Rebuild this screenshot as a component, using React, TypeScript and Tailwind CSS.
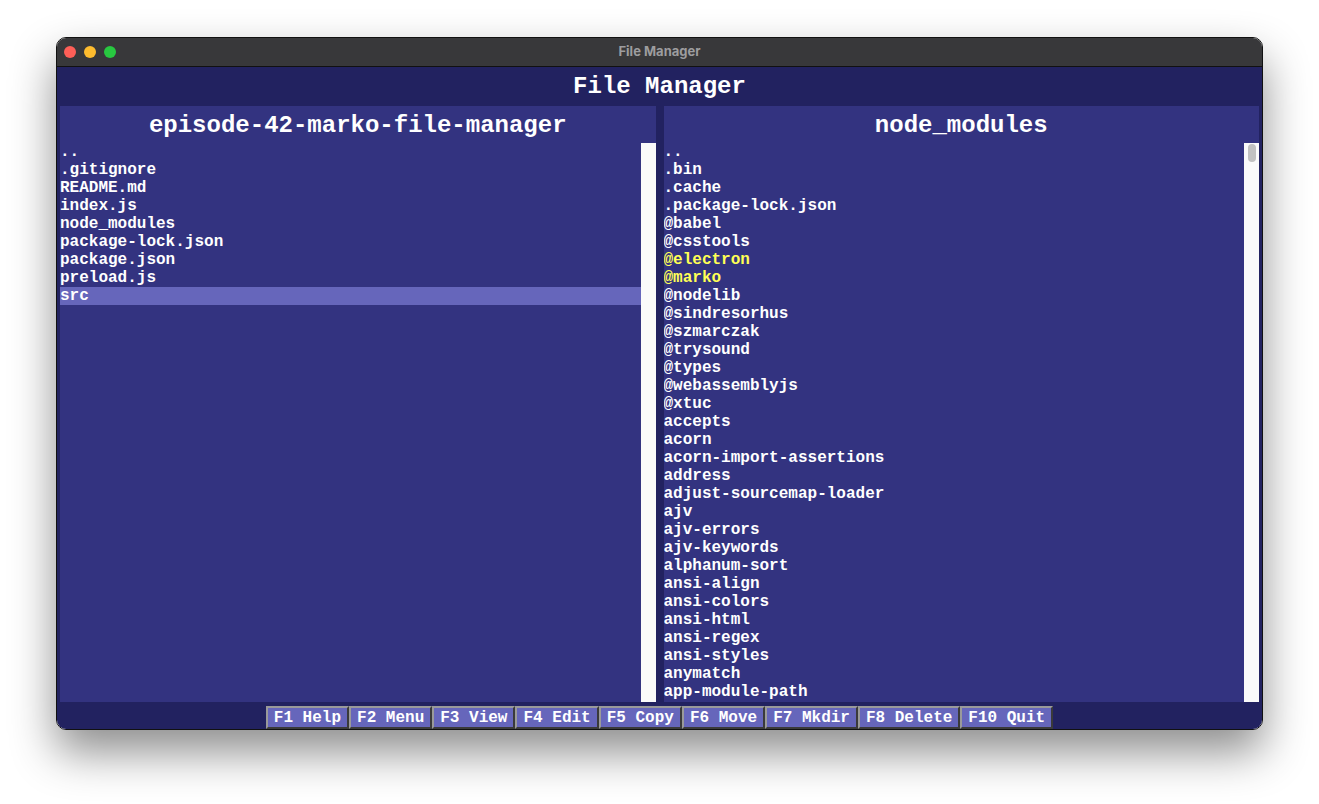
const leftFiles = [
  "..",
  ".gitignore",
  "README.md",
  "index.js",
  "node_modules",
  "package-lock.json",
  "package.json",
  "preload.js",
  "src",
];

const rightFiles = [
  "..",
  ".bin",
  ".cache",
  ".package-lock.json",
  "@babel",
  "@csstools",
  "@electron",
  "@marko",
  "@nodelib",
  "@sindresorhus",
  "@szmarczak",
  "@trysound",
  "@types",
  "@webassemblyjs",
  "@xtuc",
  "accepts",
  "acorn",
  "acorn-import-assertions",
  "address",
  "adjust-sourcemap-loader",
  "ajv",
  "ajv-errors",
  "ajv-keywords",
  "alphanum-sort",
  "ansi-align",
  "ansi-colors",
  "ansi-html",
  "ansi-regex",
  "ansi-styles",
  "anymatch",
  "app-module-path",
];

const marked = ["@electron", "@marko"];

const keys = [
  "F1 Help",
  "F2 Menu",
  "F3 View",
  "F4 Edit",
  "F5 Copy",
  "F6 Move",
  "F7 Mkdir",
  "F8 Delete",
  "F10 Quit",
];

type PanelProps = {
  title: string;
  files: string[];
  selected?: string;
  thumb?: boolean;
};

function Panel({ title, files, selected, thumb }: PanelProps) {
  return (
    <div className="flex min-w-0 flex-1 flex-col bg-[#333380]">
      <h2 className="flex h-[37px] shrink-0 items-center justify-center pt-[2px] text-[24px] font-bold leading-none text-white">
        {title}
      </h2>
      <div className="flex min-h-0 flex-1">
        <ul className="min-w-0 flex-1 overflow-hidden">
          {files.map((f) => (
            <li
              key={f}
              className={
                "h-[18px] whitespace-pre text-[16px] font-bold leading-[18px] " +
                (f === selected ? "bg-[#6666bb] " : "") +
                (marked.includes(f) ? "text-[#ffff55]" : "text-white")
              }
            >
              {f}
            </li>
          ))}
        </ul>
        <div className="w-[15px] shrink-0 bg-[#fafafa] pt-px">
          {thumb && (
            <div className="mx-auto h-[18px] w-[8px] rounded-full bg-[#c1c1c1]" />
          )}
        </div>
      </div>
    </div>
  );
}

export default function App() {
  return (
    <div className="min-h-[804px] bg-white px-[56px] pt-[37px]">
      <div className="flex h-[693px] w-[1207px] flex-col overflow-hidden rounded-[10px] border border-[#111] shadow-[0_22px_45px_rgba(0,0,0,0.45)]">
        <div className="relative flex h-[29px] shrink-0 items-center border-b border-[#111] bg-[#38383a] pl-[7px]">
          <div className="flex gap-[8px]">
            <span className="h-[12px] w-[12px] rounded-full bg-[#fe5f57]" />
            <span className="h-[12px] w-[12px] rounded-full bg-[#febc2e]" />
            <span className="h-[12px] w-[12px] rounded-full bg-[#28c840]" />
          </div>
          <div className="absolute inset-0 flex items-center justify-center font-['Inter','Noto_Sans',sans-serif] text-[13px] font-bold text-[#9d9d9f]">
            File Manager
          </div>
        </div>

        <div className="flex min-h-0 flex-1 flex-col bg-[#222260] font-['Liberation_Mono','Courier_New',monospace]">
          <h1 className="flex h-[39px] shrink-0 items-center justify-center text-[24px] font-bold leading-none text-white">
            File Manager
          </h1>

          <div className="flex min-h-0 flex-1 gap-[8px] px-[3px]">
            <Panel
              title="episode-42-marko-file-manager"
              files={leftFiles}
              selected="src"
            />
            <Panel title="node_modules" files={rightFiles} thumb />
          </div>

          <div className="flex h-[27px] shrink-0 items-end justify-center">
            {keys.map((k) => (
              <button
                key={k}
                className="h-[23px] whitespace-pre border-2 border-t-[#9a9a9a] border-l-[#9a9a9a] border-r-[#3a3a3a] border-b-[#3a3a3a] bg-[#6666bb] px-[6px] text-[16px] font-bold leading-none text-white"
              >
                {k}
              </button>
            ))}
          </div>
        </div>
      </div>
    </div>
  );
}
